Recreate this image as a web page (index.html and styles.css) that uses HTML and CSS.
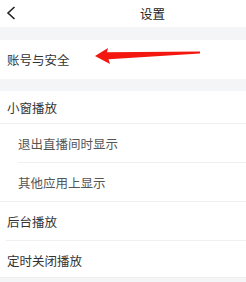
FILE: index.html
```html
<!DOCTYPE html>
<html lang="zh-CN">

<head>
    <meta charset="UTF-8">
    <meta name="viewport" content="width=device-width, initial-scale=1.0">
    <title>设置</title>
    <link rel="stylesheet" href="styles.css">
</head>

<body>
    <div class="header">
        <a class="back" href="javascript:;">
            <svg width="10" height="14" viewBox="0 0 10 14">
                <path d="M8.5 1 L2 7 L8.5 13" fill="none" stroke="#222" stroke-width="1.6" />
            </svg>
        </a>
        <div class="title">设置</div>
    </div>

    <div class="group first">
        <div class="row account">账号与安全</div>
    </div>

    <div class="group">
        <div class="row small">小窗播放</div>
        <div class="row sub line-in">退出直播间时显示</div>
        <div class="row sub">其他应用上显示</div>
        <div class="row line-in2">后台播放</div>
        <div class="row last">定时关闭播放</div>
    </div>

    <!-- 红色箭头标注 -->
    <svg class="mark" width="246" height="80" viewBox="0 0 246 80">
        <polygon points="95,56 108,48 107,52.3 200,51.6 200,53.4 108.5,59.2 110,64" fill="#f3170f" />
    </svg>
</body>

</html>
```

FILE: styles.css
```css
* {
    margin: 0;
    padding: 0;
}

body {
    background-color: #f4f5f7;
    font-family: "Noto Sans CJK SC", "Noto Sans", sans-serif;
    font-size: 12.5px;
    color: #333;
    position: relative;
}

.header {
    height: 27px;
    background-color: #fff;
    display: flex;
    align-items: center;
}

.back {
    display: flex;
    margin-left: 6px;
    margin-top: -2px;
}

.title {
    margin-left: 124px;
    margin-top: -1px;
    color: #222;
}

.group {
    background-color: #fff;
    margin-top: 12px;
}

.group.first {
    margin-top: 13px;
}

.row {
    display: flex;
    align-items: center;
    height: 39px;
    padding-left: 7px;
    position: relative;
}

.row::after {
    content: "";
    position: absolute;
    left: 0;
    right: 0;
    bottom: 0;
    height: 1px;
    background-color: #f0f0f0;
}

.account::after {
    display: none;
}

.row.small {
    height: 33px;
    padding-bottom: 1px;
    box-sizing: border-box;
    height: 33px;
}

.row.sub {
    padding-left: 18px;
    color: #555;
}

.line-in::after {
    left: 18px;
}

.line-in2::after {
    left: 6px;
}

.row.last {
    height: 35px;
    padding-top: 2px;
}

.mark {
    position: absolute;
    left: 0;
    top: 0;
}
```
